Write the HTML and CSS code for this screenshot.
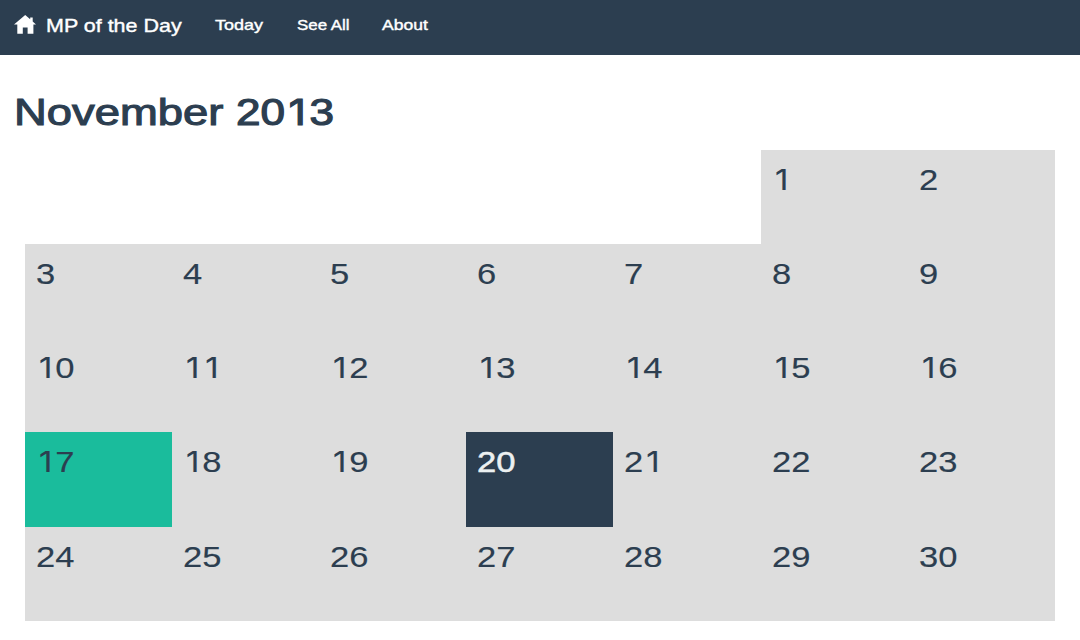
FILE: index.html
```html
<!DOCTYPE html>
<html lang="en">
<head>
<meta charset="utf-8">
<title>MP of the Day</title>
<link rel="stylesheet" href="styles.css">
</head>
<body>
<nav class="navbar">
  <a class="brand">
    <svg class="home" viewBox="0 0 22 19" width="22" height="19"><path fill="#fff" d="M11.2 0 L16.2 4.3 V2.4 H18.7 V6.4 L22 9.6 H19.4 V18.8 H13.6 V12.4 H8.8 V18.8 H3.3 V9.6 H0 Z"/></svg>
    <span class="wide brand-text">MP of the Day</span>
  </a>
  <a class="link today"><span class="wide">Today</span></a>
  <a class="link all"><span class="wide">See All</span></a>
  <a class="link about"><span class="wide">About</span></a>
</nav>
<main>
  <h1 class="title"><span class="wide month">November</span><span class="wide year">20<i class="one">1</i>3</span></h1>
  <div class="calendar">
    <div class="day first"><span><i class="one">1</i></span></div><div class="day"><span>2</span></div>
    <div class="day"><span>3</span></div><div class="day"><span>4</span></div><div class="day"><span>5</span></div><div class="day"><span>6</span></div><div class="day"><span>7</span></div><div class="day"><span>8</span></div><div class="day"><span>9</span></div>
    <div class="day"><span><i class="one">1</i>0</span></div><div class="day"><span><i class="one">1</i><i class="one">1</i></span></div><div class="day"><span><i class="one">1</i>2</span></div><div class="day"><span><i class="one">1</i>3</span></div><div class="day"><span><i class="one">1</i>4</span></div><div class="day"><span><i class="one">1</i>5</span></div><div class="day"><span><i class="one">1</i>6</span></div>
    <div class="day active"><span><i class="one">1</i>7</span></div><div class="day"><span><i class="one">1</i>8</span></div><div class="day"><span><i class="one">1</i>9</span></div><div class="day current"><span>20</span></div><div class="day"><span>2<i class="one">1</i></span></div><div class="day"><span>22</span></div><div class="day"><span>23</span></div>
    <div class="day"><span>24</span></div><div class="day"><span>25</span></div><div class="day"><span>26</span></div><div class="day"><span>27</span></div><div class="day"><span>28</span></div><div class="day"><span>29</span></div><div class="day"><span>30</span></div>
  </div>
</main>
</body>
</html>
```
FILE: styles.css
```css
* { box-sizing: border-box; }
body {
  margin: 0;
  background: #fff;
  color: #2c3e50;
  font-family: "Liberation Sans", Arial, sans-serif;
}
.navbar {
  display: flex;
  height: 54.5px;
  padding-left: 14px;
  background: #2c3e50;
  color: #fff;
  white-space: nowrap;
}
.wide { display: inline-block; transform-origin: 0 0; }
.brand { display: flex; width: 201px; font-size: 19px; line-height: 51px; }
.home { margin: 15px 10px 0 0; flex: none; }
.brand-text { transform: scaleX(1.13); -webkit-text-stroke: 0.4px #fff; }
.link { font-size: 15px; line-height: 49px; -webkit-text-stroke: 0.4px #fff; }
.today { width: 82px; }
.today .wide { transform: scaleX(1.2); }
.all { width: 85px; }
.all .wide { transform: scaleX(1.125); }
.about .wide { transform: scaleX(1.17); }
.title {
  display: flex;
  margin: 0;
  padding: 34px 0 0 14px;
  height: 95.5px;
  font-size: 37.5px;
  font-weight: 400;
  line-height: 46px;
}
.month { width: 222px; transform: scaleX(1.21); -webkit-text-stroke: 1.1px #2c3e50; }
.year { transform: scaleX(1.175); -webkit-text-stroke: 1.2px #2c3e50; }
.calendar {
  display: grid;
  grid-template-columns: repeat(7, 147.2px);
  grid-auto-rows: 94.15px;
  margin-left: 24.7px;
}
.day {
  padding: 13px 0 0 10.9px;
  background: #ddd;
  font-size: 29.3px;
  line-height: 34px;
  -webkit-text-stroke: 0.15px #2c3e50;
}
.day span { display: inline-block; transform: scaleX(1.18); transform-origin: 0 0; }
/* footless numeral, set on the same advance as the other digits */
.one {
  display: inline-block;
  width: 0.585em;
  padding-left: 0.09em;
  font-family: Inter, sans-serif;
  font-size: 0.95em;
  font-style: normal;
  line-height: 1;
}
.first { grid-column: 6; }
.active { background: #1abc9c; }
.current { background: #2c3e50; color: #ecf0f1; -webkit-text-stroke: 0.5px #ecf0f1; }
```
